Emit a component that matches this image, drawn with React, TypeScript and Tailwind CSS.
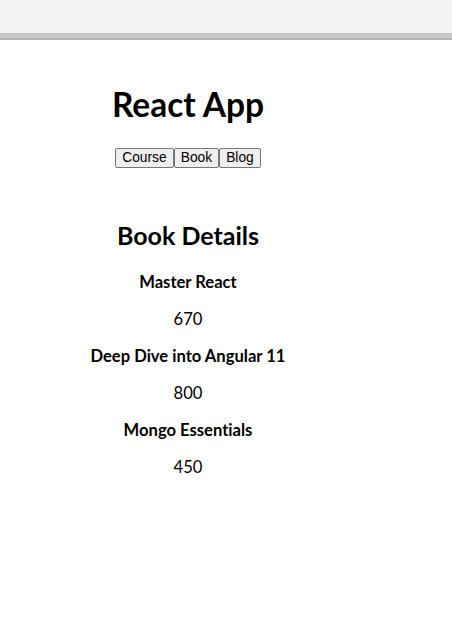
import React, { useState } from 'react';

type Book = { id: number; name: string; price: number };

const books: Book[] = [
  { id: 101, name: 'Master React', price: 670 },
  { id: 102, name: 'Deep Dive into Angular 11', price: 800 },
  { id: 103, name: 'Mongo Essentials', price: 450 },
];

const App: React.FC = () => {
  const [view, setView] = useState<'course' | 'book' | 'blog'>('book');

  const btn =
    'bg-[#efefef] border border-[#767676] rounded-[2px] px-[6px] py-[1px] h-[20px] text-[13.8px] leading-[16px] text-black';

  return (
    <div className="min-h-screen bg-white text-black [font-variant-ligatures:none]" style={{ fontFamily: 'Lato, "Open Sans", sans-serif' }}>
      {/* browser chrome strip */}
      <div className="h-[33px] bg-[#f1f2f4]"></div>
      <div className="h-[5px] bg-[#c8c8c8]"></div>
      <div className="h-[2px] bg-[#b4b4b4]"></div>

      <div className="w-[376px] text-center">
        <h1 className="mt-[44px] text-[33.5px] leading-[40px] font-bold">React App</h1>

        <div className="mt-[24px] flex justify-center" style={{ fontFamily: '"Liberation Sans", Arial, sans-serif' }}>
          <button className={btn} onClick={() => setView('course')}>Course</button>
          <button className={btn} onClick={() => setView('book')}>Book</button>
          <button className={btn} onClick={() => setView('blog')}>Blog</button>
        </div>

        {view === 'book' && (
          <div>
            <h2 className="mt-[52px] text-[25px] leading-[30px] font-bold">Book Details</h2>
            <div className="mt-[22px] flex flex-col gap-[16px] text-[16.6px] leading-[21px]">
              {books.map((b) => (
                <React.Fragment key={b.id}>
                  <h4 className="font-bold">{b.name}</h4>
                  <p>{b.price}</p>
                </React.Fragment>
              ))}
            </div>
          </div>
        )}
      </div>
    </div>
  );
};

export default App;
